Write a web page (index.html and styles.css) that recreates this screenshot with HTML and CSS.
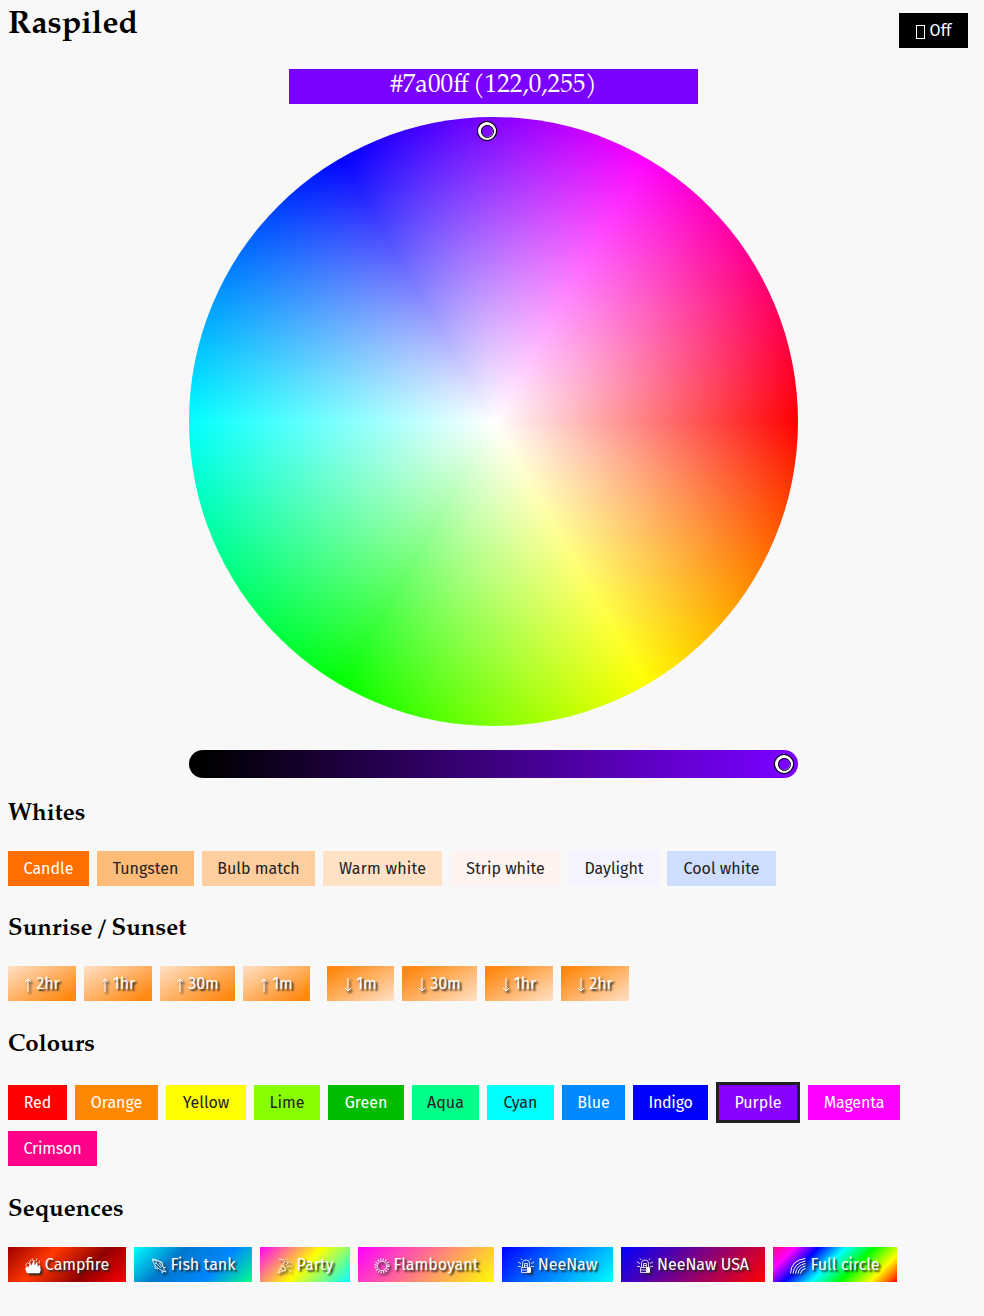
FILE: index.html
```html
<!DOCTYPE html>
<html lang="en">
<head>
<meta charset="utf-8">
<title>Raspiled</title>
<link rel="stylesheet" href="styles.css">
</head>
<body>
<svg class="defs" width="0" height="0" aria-hidden="true">
  <symbol id="siren" viewBox="0 0 16 16"><path d="M4.500 9.500V5q0-3 3.500-3t3.500 3v4.500M3.500 9.500h9v5h-9zM0 4l3 1.500M0 8.500h3M13 5.500L16 4M13 8.500h3M3 .5l1 1.500M13 .5l-1 1.500M6.500 9V5.500h3V9M7 7.500h2M4 12h5"/><path class="solid" d="M9.500 10h3v4h-3z"/></symbol>
</svg>
<header class="top">
  <h1>Raspiled</h1>
  <button class="btn off"><span class="missing"></span>Off</button>
</header>
<main>
  <section class="picker">
    <div class="readout">#7a00ff (122,0,255)</div>
    <div class="wheel"><i class="handle wheel-handle"></i></div>
    <div class="slider"><i class="handle slider-handle"></i></div>
  </section>

  <h2 class="whites-title">Whites</h2>
  <div class="row">
    <button class="btn candle">Candle</button>
    <button class="btn tungsten">Tungsten</button>
    <button class="btn bulb">Bulb match</button>
    <button class="btn warm">Warm white</button>
    <button class="btn strip">Strip white</button>
    <button class="btn daylight">Daylight</button>
    <button class="btn cool">Cool white</button>
  </div>

  <h2 class="sun-title">Sunrise / Sunset</h2>
  <div class="row sun">
    <button class="btn rise w68"><svg class="arrow" viewBox="0 0 8 16"><path d="M4 15V2M1 5l3-3 3 3"/></svg>2hr</button>
    <button class="btn rise w68"><svg class="arrow" viewBox="0 0 8 16"><path d="M4 15V2M1 5l3-3 3 3"/></svg>1hr</button>
    <button class="btn rise w75"><svg class="arrow" viewBox="0 0 8 16"><path d="M4 15V2M1 5l3-3 3 3"/></svg>30m</button>
    <button class="btn rise w67"><svg class="arrow" viewBox="0 0 8 16"><path d="M4 15V2M1 5l3-3 3 3"/></svg>1m</button>
    <button class="btn set w67 split"><svg class="arrow" viewBox="0 0 8 16"><path d="M4 1v13M1 11l3 3 3-3"/></svg>1m</button>
    <button class="btn set w75"><svg class="arrow" viewBox="0 0 8 16"><path d="M4 1v13M1 11l3 3 3-3"/></svg>30m</button>
    <button class="btn set w68"><svg class="arrow" viewBox="0 0 8 16"><path d="M4 1v13M1 11l3 3 3-3"/></svg>1hr</button>
    <button class="btn set w68"><svg class="arrow" viewBox="0 0 8 16"><path d="M4 1v13M1 11l3 3 3-3"/></svg>2hr</button>
  </div>

  <h2 class="colours-title">Colours</h2>
  <div class="row colours">
    <button class="btn red">Red</button>
    <button class="btn orange">Orange</button>
    <button class="btn yellow">Yellow</button>
    <button class="btn lime">Lime</button>
    <button class="btn green">Green</button>
    <button class="btn aqua">Aqua</button>
    <button class="btn cyan">Cyan</button>
    <button class="btn blue">Blue</button>
    <button class="btn indigo">Indigo</button>
    <button class="btn purple current">Purple</button>
    <button class="btn magenta">Magenta</button>
    <button class="btn crimson">Crimson</button>
  </div>

  <h2 class="seq-title">Sequences</h2>
  <div class="row seq">
    <button class="btn campfire"><svg class="icon" viewBox="0 0 16 16"><path class="solid flame" d="M2 15L.5 11 2 8l1.500 2.500L5 5l1.500 3L9 2l.5 6L12 4l.5 5L14.500 7l1 5-1 3z"/><path class="thin" d="M3.500 6L6 1.500M.5 7.500l2-3M7 3l1-2.500M11 3l1-2.500M14 5.500l.5-3"/></svg>Campfire</button>
    <button class="btn fish"><svg class="icon thin" viewBox="0 0 16 16"><path d="M1 1q9 0 12 10l2 3-3-1Q4 10 1 1zM2 2l4 1-2 3M7 3l4 1 1 4M4 7l0 3 3 1M5 5l5 5M8 5l3 4M12 10l3-1M11 12v3l2-2"/></svg>Fish tank</button>
    <button class="btn party"><svg class="icon thin" viewBox="0 0 16 16"><path d="M1 15L5 7l4 5zM3 11l3 2M5 7q3 1 4 5M6 6q3-2 0-5M2 1l4 1M9 7l4-4M10 9q3-3 5 0M10 1v1M14 5h1M12 12l2 2M11 5l-2-2"/></svg>Party</button>
    <button class="btn flamboyant"><svg class="icon thin" viewBox="0 0 16 16"><circle cx="8" cy="8" r="4.600"/><circle cx="8" cy="8" r="6.400" stroke-width="2.500" stroke-dasharray="1 1.513"/></svg>Flamboyant</button>
    <button class="btn neenaw"><svg class="icon thin"><use href="#siren"/></svg>NeeNaw</button>
    <button class="btn usa"><svg class="icon thin"><use href="#siren"/></svg>NeeNaw USA</button>
    <button class="btn circle"><svg class="icon" viewBox="0 0 16 16"><path d="M.5 15.500Q1 2 15.500.5M3 15.500Q4 5 15.500 3M5.500 15.500Q6.500 7 15.500 5.500M8 15.500Q9 9 15.500 8M10.500 15.500Q11 11 15.500 10.500"/></svg>Full circle</button>
  </div>
</main>
</body>
</html>
```
FILE: styles.css
```css
*, *::before, *::after { box-sizing: border-box; }
body {
  margin: 0;
  padding: 0 8px;
  height: 1316px;
  background: #f8f8f8;
  color: #000;
  font-family: "TeX Gyre Pagella", "Palatino Linotype", Palatino, "Liberation Serif", serif;
}
.defs { position: absolute; }
.top { display: flex; justify-content: space-between; height: 69px; padding-right: 8px; }
h1, h2 { margin: 0; font-weight: bold; white-space: nowrap; }
h1 { font-size: 32px; line-height: 51px; }
h2 { font-size: 24px; line-height: 38px; height: 32px; word-spacing: -2.600px; }

.picker { display: flex; flex-direction: column; align-items: center; width: 609px; margin-left: 181px; }
.readout {
  width: 409px; height: 35px;
  background: #7a00ff; color: #fff;
  font-size: 25.2px; line-height: 36px; text-align: center; word-spacing: -2px;
}
.wheel {
  position: relative;
  width: 609px; height: 609px; margin-top: 13px;
  border-radius: 50%;
  background:
    radial-gradient(closest-side, #fff, rgba(255, 255, 255, 0)),
    conic-gradient(from 90deg, #f00, #ff0, #0f0, #0ff, #00f, #f0f, #f00);
}
.slider {
  position: relative;
  width: 609px; height: 28px; margin-top: 24px;
  border-radius: 14px;
  background: linear-gradient(90deg, #000 14px, #7a00ff 595px);
}
.handle {
  position: absolute;
  width: 20px; height: 20px;
  border: 1px solid #000; border-radius: 50%;
}
.handle::before {
  content: ""; position: absolute; inset: 0;
  border: 3px solid #fff; border-radius: 50%;
  box-shadow: 0 0 0 1px #000;
}
.handle::after {
  content: ""; position: absolute; inset: 2.500px;
  border: 1.500px solid #000; border-radius: 50%;
}
.wheel-handle { left: 288px; top: 4px; }
.slider-handle { left: 585px; top: 4px; }

.whites-title { margin-top: 18px; margin-bottom: 23px; }
.sun-title { margin-top: 25px; margin-bottom: 23px; }
.colours-title { margin-top: 26px; margin-bottom: 26px; }
.seq-title { margin-top: 26px; margin-bottom: 23px; }

.row { display: flex; flex-wrap: wrap; gap: 11px 8px; }
.btn {
  display: flex; align-items: center; justify-content: center;
  height: 35px; padding: 0; border: 0; border-radius: 0;
  color: #fff; white-space: nowrap;
  font-family: "Fira Sans", "Trebuchet MS", "Noto Sans", sans-serif;
  font-size: 16px; line-height: 35px;
}
.off { width: 69px; margin-top: 13px; background: #000; gap: 5px; }
.missing { width: 9px; height: 14px; margin-top: 2px; border: 1px solid #fff; }

.candle { width: 81px; background: #ff6f00; }
.tungsten { width: 97px; background: #ffbb78; color: #222; }
.bulb { width: 113px; background: #ffce9f; color: #222; }
.warm { width: 119px; background: #ffe1c6; color: #222; letter-spacing: 0.2px; }
.strip { width: 111px; background: #fff3ef; color: #222; }
.daylight { width: 90px; background: #f5f3ff; color: #222; }
.cool { width: 109px; background: #cfddff; color: #222; }

.sun .btn, .seq .btn { text-shadow: 2px 2px 2px #222; }
.rise { background: linear-gradient(150deg, #ffe1c6, #ff8810 90%); }
.set { background: linear-gradient(150deg, #ff8810 10%, #ffe1c6); }
.w67 { width: 67px; }
.w68 { width: 68px; }
.w75 { width: 75px; }
.split { margin-left: 9px; }

.red { width: 59px; background: #f00; }
.orange { width: 83px; background: #ff8800; }
.yellow { width: 80px; background: #ff0; color: #222; }
.lime { width: 66px; background: #8f0; color: #222; }
.green { width: 76px; background: #0b0; }
.aqua { width: 67px; background: #00ff88; color: #222; }
.cyan { width: 67px; background: #0ff; color: #222; }
.blue { width: 63px; background: #08f; }
.indigo { width: 75px; background: #00f; letter-spacing: -0.250px; }
.purple { width: 84px; background: #80f; }
.magenta { width: 92px; background: #f0f; letter-spacing: -0.150px; }
.crimson { width: 89px; background: #ff0088; letter-spacing: -0.200px; }
.current { height: 41px; margin: -3px 0; border: 3px solid #222; }

.arrow, .icon { flex: none; fill: none; stroke: #fff; stroke-width: 1; filter: drop-shadow(2px 2px 1px #222); }
.arrow { width: 8px; height: 16px; margin-right: 4px; margin-top: 2px; }
.icon { width: 16px; height: 16px; margin-right: 4px; margin-top: 2px; }
.solid { fill: #fff; }
.thin { stroke-width: 0.800; }
.flame { stroke-width: 0.500; }
.campfire { width: 118px; background: linear-gradient(135deg, #a00000, #ff3800 33%, #900000 67%, #f00); }
.fish { width: 118px; background: linear-gradient(135deg, #0ff, #0077cc 34%, #0088ff 68%, #00ff88); }
.party { width: 90px; background: linear-gradient(135deg, #f0f, #ff0 50%, #0ff); }
.flamboyant { width: 136px; background: linear-gradient(135deg, #f0f, #ff0); }
.neenaw { width: 111px; background: linear-gradient(135deg, #00f, #0ff); }
.usa { width: 144px; background: linear-gradient(135deg, #00f, #f00); }
.circle { width: 124px; background: linear-gradient(135deg, #ff0088, #f0f 14%, #00f 29%, #0ff 46%, #0f0 64%, #ff0 83%, #f00); }
```
